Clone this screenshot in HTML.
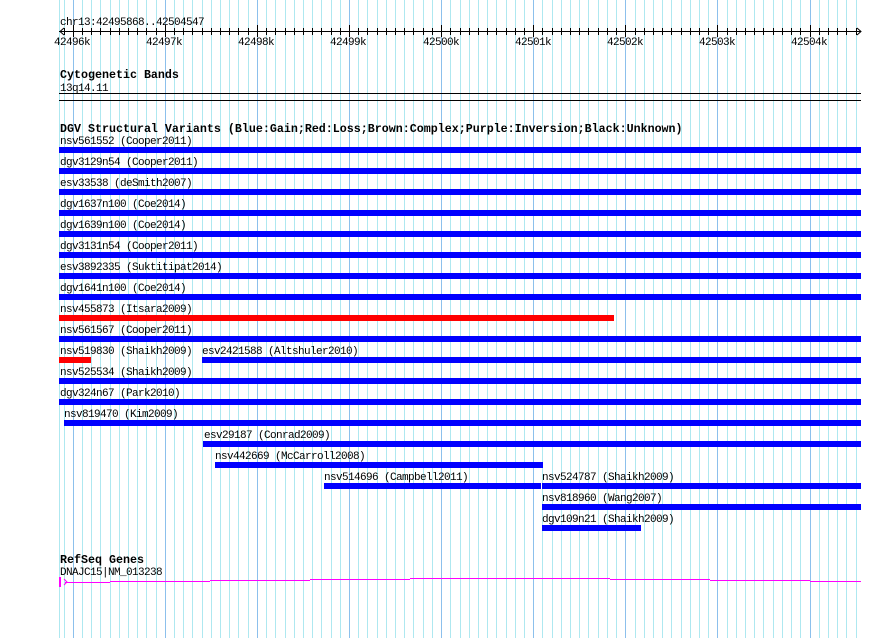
<!DOCTYPE html>
<html><head><meta charset="utf-8"><style>
html,body{margin:0;padding:0;background:#fff;width:890px;height:638px;overflow:hidden;position:relative}
.t{position:absolute;font-family:"Liberation Mono",monospace;font-size:11px;letter-spacing:-0.6px;line-height:10px;white-space:pre;color:#000;margin-top:2px}
.b{position:absolute;font-family:"Liberation Mono",monospace;font-size:11.67px;font-weight:bold;line-height:12px;white-space:pre;color:#000;margin-top:1px}
.bar{position:absolute;height:6px;background:#0000ff}
.red{background:#ff0000}
</style></head><body>
<svg id="g" width="890" height="638" style="position:absolute;left:0;top:0">
</svg>
<script>
var s=document.getElementById('g'),h='';
h+='<line x1="59.5" y1="0" x2="59.5" y2="638" stroke="#aee8f0"/>';
for(var i=0;;i++){var x=63.5+9.21*i;if(x>861)break;var d=(i%10==1);
h+='<line x1="'+Math.round(x)+'.5" y1="0" x2="'+Math.round(x)+'.5" y2="638" stroke="'+(d?'#8cc0ec':'#aee8f0')+'"/>';}
h+='<line x1="59" y1="31.5" x2="861" y2="31.5" stroke="#000"/>';
h+='<polyline points="64,28 60,31.5 64,35" fill="none" stroke="#000"/>';
h+='<polyline points="857,28 861,31.5 857,35" fill="none" stroke="#000"/>';
for(var i=0;;i++){var x=63.5+9.21*i;if(x>858)break;var d=(i%10==1);var xx=Math.round(x)+0.5;
h+='<line x1="'+xx+'" y1="'+(d?25:28)+'" x2="'+xx+'" y2="'+(d?37:35)+'" stroke="#000"/>';}
h+='<line x1="59" y1="93.5" x2="861" y2="93.5" stroke="#000"/>';
h+='<line x1="59" y1="100.5" x2="861" y2="100.5" stroke="#000"/>';
var seg=[[65,110,582],[110,210,581],[210,310,580],[310,410,579],[410,510,578],[510,610,578],[610,710,579],[710,810,580],[810,861,581]];
seg.forEach(function(q){h+='<line x1="'+q[0]+'" y1="'+(q[2]+.5)+'" x2="'+q[1]+'" y2="'+(q[2]+.5)+'" stroke="#ff00ff"/>';});
h+='<rect x="59" y="577" width="2" height="10" fill="#ff00ff"/>';
h+='<polyline points="64,579 67,582 64,585" fill="none" stroke="#ff00ff"/>';
s.innerHTML=h;
</script>
<div class="t" style="left:60px;top:16px">chr13:42495868..42504547</div>
<div class="t" style="left:54px;top:36px">42496k</div>
<div class="t" style="left:146px;top:36px">42497k</div>
<div class="t" style="left:238px;top:36px">42498k</div>
<div class="t" style="left:330px;top:36px">42499k</div>
<div class="t" style="left:423px;top:36px">42500k</div>
<div class="t" style="left:515px;top:36px">42501k</div>
<div class="t" style="left:607px;top:36px">42502k</div>
<div class="t" style="left:699px;top:36px">42503k</div>
<div class="t" style="left:791px;top:36px">42504k</div>
<div class="b" style="left:60px;top:68px">Cytogenetic Bands</div>
<div class="t" style="left:60px;top:82px">13q14.11</div>
<div class="b" style="left:60px;top:122px">DGV Structural Variants (Blue:Gain;Red:Loss;Brown:Complex;Purple:Inversion;Black:Unknown)</div>

<div class="t" style="left:60px;top:135px">nsv561552 (Cooper2011)</div><div class="bar" style="left:59px;width:802px;top:147px"></div>
<div class="t" style="left:60px;top:156px">dgv3129n54 (Cooper2011)</div><div class="bar" style="left:59px;width:802px;top:168px"></div>
<div class="t" style="left:60px;top:177px">esv33538 (deSmith2007)</div><div class="bar" style="left:59px;width:802px;top:189px"></div>
<div class="t" style="left:60px;top:198px">dgv1637n100 (Coe2014)</div><div class="bar" style="left:59px;width:802px;top:210px"></div>
<div class="t" style="left:60px;top:219px">dgv1639n100 (Coe2014)</div><div class="bar" style="left:59px;width:802px;top:231px"></div>
<div class="t" style="left:60px;top:240px">dgv3131n54 (Cooper2011)</div><div class="bar" style="left:59px;width:802px;top:252px"></div>
<div class="t" style="left:60px;top:261px">esv3892335 (Suktitipat2014)</div><div class="bar" style="left:59px;width:802px;top:273px"></div>
<div class="t" style="left:60px;top:282px">dgv1641n100 (Coe2014)</div><div class="bar" style="left:59px;width:802px;top:294px"></div>
<div class="t" style="left:60px;top:303px">nsv455873 (Itsara2009)</div><div class="bar red" style="left:59px;width:555px;top:315px"></div>
<div class="t" style="left:60px;top:324px">nsv561567 (Cooper2011)</div><div class="bar" style="left:59px;width:802px;top:336px"></div>
<div class="t" style="left:60px;top:345px">nsv519830 (Shaikh2009)</div><div class="bar red" style="left:59px;width:32px;top:357px"></div>
<div class="t" style="left:202px;top:345px">esv2421588 (Altshuler2010)</div><div class="bar" style="left:202px;width:659px;top:357px"></div>
<div class="t" style="left:60px;top:366px">nsv525534 (Shaikh2009)</div><div class="bar" style="left:59px;width:802px;top:378px"></div>
<div class="t" style="left:60px;top:387px">dgv324n67 (Park2010)</div><div class="bar" style="left:59px;width:802px;top:399px"></div>
<div class="t" style="left:64px;top:408px">nsv819470 (Kim2009)</div><div class="bar" style="left:64px;width:797px;top:420px"></div>
<div class="t" style="left:204px;top:429px">esv29187 (Conrad2009)</div><div class="bar" style="left:203px;width:658px;top:441px"></div>
<div class="t" style="left:215px;top:450px">nsv442669 (McCarroll2008)</div><div class="bar" style="left:215px;width:328px;top:462px"></div>
<div class="t" style="left:324px;top:471px">nsv514696 (Campbell2011)</div><div class="bar" style="left:324px;width:217px;top:483px"></div>
<div class="t" style="left:542px;top:471px">nsv524787 (Shaikh2009)</div><div class="bar" style="left:542px;width:319px;top:483px"></div>
<div class="t" style="left:542px;top:492px">nsv818960 (Wang2007)</div><div class="bar" style="left:542px;width:319px;top:504px"></div>
<div class="t" style="left:542px;top:513px">dgv109n21 (Shaikh2009)</div><div class="bar" style="left:542px;width:99px;top:525px"></div>

<div class="b" style="left:60px;top:553px">RefSeq Genes</div>
<div class="t" style="left:60px;top:566px">DNAJC15|NM_013238</div>
</body></html>
